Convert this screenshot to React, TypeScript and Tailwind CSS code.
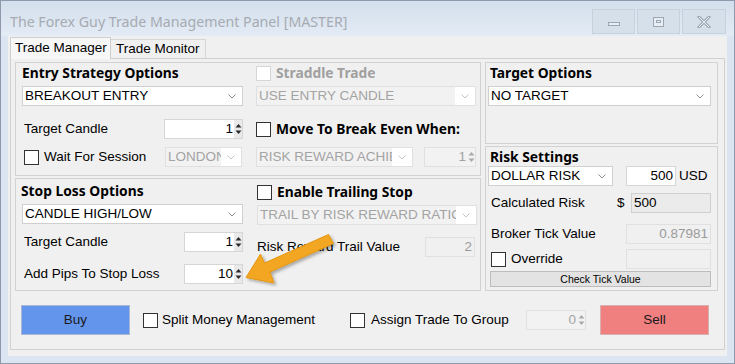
import React from "react";

const SANS = "font-['Liberation_Sans',Arial,sans-serif]";
const HEAD = "font-['Noto_Sans',sans-serif] font-bold text-[13.8px] leading-[16px]";

function Check({ disabled = false }: { disabled?: boolean }) {
  return (
    <div
      className={`w-[15px] h-[15px] shrink-0 bg-white border ${
        disabled ? "border-[#d6d6d6]" : "border-[#333333]"
      }`}
    />
  );
}

function Chevron({ light = false }: { light?: boolean }) {
  return (
    <svg width="8" height="5" viewBox="0 0 8 5">
      <polyline
        points="0.5,0.5 4,4 7.5,0.5"
        fill="none"
        stroke={light ? "#c4c4c4" : "#8f8f8f"}
        strokeWidth="1"
      />
    </svg>
  );
}

function Select({
  text,
  w,
  disabled = false,
  className = "",
}: {
  text: string;
  w: string;
  disabled?: boolean;
  className?: string;
}) {
  return (
    <div
      className={`${w} h-[20px] shrink-0 flex items-stretch border ${
        disabled ? "border-[#e0e0e0] bg-[#f2f2f2]" : "border-[#cfcfcf] bg-white"
      } ${className}`}
    >
      <div
        className={`flex-1 overflow-hidden whitespace-nowrap pl-[2px] text-[13.5px] leading-[18px] ${
          disabled ? "text-[#a3a3a3]" : "text-black"
        }`}
      >
        {text}
      </div>
      <div className="w-[20px] shrink-0 flex items-center justify-center bg-white">
        <Chevron light={disabled} />
      </div>
    </div>
  );
}

function SpinArrows({ disabled = false }: { disabled?: boolean }) {
  const c = disabled ? "#a9a9a9" : "#2b2b2b";
  return (
    <div className={`w-[8px] shrink-0 flex items-center justify-center ${disabled ? "" : "bg-[#e9e9e9]"}`}>
      <svg width="7" height="14" viewBox="0 0 7 14">
        <polygon points="0.5,5.5 3.5,2 6.5,5.5" fill={c} />
        <polygon points="0.5,8.5 3.5,12 6.5,8.5" fill={c} />
      </svg>
    </div>
  );
}

function Spinner({
  value,
  w,
  disabled = false,
  className = "",
}: {
  value: string;
  w: string;
  disabled?: boolean;
  className?: string;
}) {
  return (
    <div
      className={`${w} h-[20px] shrink-0 flex items-stretch border ${
        disabled ? "border-[#e0e0e0] bg-[#f2f2f2]" : "border-[#d6d6d6] bg-white"
      } ${className}`}
    >
      <div
        className={`flex-1 text-right text-[13.5px] leading-[18px] pr-[1px] ${
          disabled ? "text-[#a3a3a3]" : "text-black"
        }`}
      >
        {value}
      </div>
      <SpinArrows disabled={disabled} />
    </div>
  );
}

function Field({
  value,
  w,
  align = "right",
  variant = "white",
  className = "",
}: {
  value: string;
  w: string;
  align?: "left" | "right";
  variant?: "white" | "readonly" | "disabled";
  className?: string;
}) {
  const v =
    variant === "white"
      ? "bg-white border-[#d6d6d6] text-black"
      : variant === "readonly"
      ? "bg-[#ebebeb] border-[#cfcfcf] text-black"
      : "bg-[#f0f0f0] border-[#e0e0e0] text-[#9a9a9a]";
  return (
    <div
      className={`${w} h-[20px] shrink-0 border px-[2px] text-[13.5px] leading-[18px] ${v} ${
        align === "right" ? "text-right" : "text-left"
      } ${className}`}
    >
      {value}
    </div>
  );
}

function Label({ children, className = "" }: { children: React.ReactNode; className?: string }) {
  return <div className={`text-[13.5px] leading-[18px] text-black whitespace-nowrap ${className}`}>{children}</div>;
}

export default function App() {
  return (
    <div
      className={`relative w-[735px] h-[364px] overflow-hidden border border-[#8d9aab] bg-[#dbe5f1] flex flex-col ${SANS}`}
    >
      {/* Title bar */}
      <div className="h-[35px] shrink-0 flex items-start bg-gradient-to-b from-[#d3dfec] to-[#e3ebf5]">
        <div className="ml-[9px] mt-[11px] leading-[20px] text-[14.2px] text-[#a7abb1] font-['Noto_Sans',sans-serif] whitespace-nowrap">
          The Forex Guy Trade Management Panel [MASTER]
        </div>
        <div className="ml-auto mr-[8px] mt-[8px] flex gap-[2px]">
          <div className="w-[43px] h-[25px] border border-[#c6d1de] bg-[#d6e0eb] flex items-center justify-center">
            <div className="w-[12px] h-[4px] mt-[4px] border border-[#9ba6b3] bg-[#e8edf3]" />
          </div>
          <div className="w-[43px] h-[25px] border border-[#c6d1de] bg-[#d6e0eb] flex items-center justify-center">
            <div className="w-[11px] h-[10px] border border-[#9ba6b3] bg-[#e8edf3] flex items-center justify-center">
              <div className="w-[5px] h-[3px] border border-[#9ba6b3]" />
            </div>
          </div>
          <div className="w-[44px] h-[25px] border border-[#c6d1de] bg-[#d6e0eb] flex items-center justify-center">
            <svg width="14" height="12" viewBox="0 0 14 12">
              <path d="M2 1 L12 11 M12 1 L2 11" stroke="#9ea9b6" strokeWidth="3" strokeLinecap="square" />
              <path d="M2 1 L12 11 M12 1 L2 11" stroke="#eef2f7" strokeWidth="1" />
            </svg>
          </div>
        </div>
      </div>

      {/* Client area */}
      <div className="mx-[7px] h-[320px] shrink-0 bg-[#f0f0f0] flex flex-col">
        {/* Tabs */}
        <div className="ml-[2px] mt-[1px] h-[21px] flex items-end">
          <div className="w-[101px] h-[22px] -mb-[1px] border border-b-0 border-[#cfcfcf] bg-[#f7f7f7] pl-[4px] text-[13.5px] leading-[20px] text-black relative z-10">
            Trade Manager
          </div>
          <div className="w-[95px] h-[19px] border border-b-0 border-l-0 border-[#d6d6d6] bg-[#f0f0f0] pl-[5px] text-[13.5px] leading-[18px] text-black">
            Trade Monitor
          </div>
        </div>

        {/* Tab panel */}
        <div className="ml-[2px] w-[715px] h-[292px] border border-[#d0d0d0] bg-[#f0f0f0] flex flex-col">
          <div className="ml-[4px] mt-[3px] flex gap-[4px]">
            {/* Left column */}
            <div className="w-[466px] flex flex-col gap-[2px]">
              {/* Entry Strategy */}
              <div className="h-[114px] border border-[#d2d2d2] pl-[6px] flex flex-col">
                <div className="mt-[2px] h-[16px] flex">
                  <div className={`w-[221px] ${HEAD} text-black`}>Entry Strategy Options</div>
                  <div className="ml-[13px] flex items-center">
                    <Check disabled />
                    <div className={`ml-[5px] ${HEAD} text-[#a0a0a0]`}>Straddle Trade</div>
                  </div>
                </div>
                <div className="mt-[5px] h-[20px] flex gap-[13px]">
                  <Select text="BREAKOUT ENTRY" w="w-[221px]" />
                  <Select text="USE ENTRY CANDLE" w="w-[220px]" disabled />
                </div>
                <div className="mt-[13px] h-[20px] flex gap-[13px]">
                  <div className="w-[221px] flex items-center">
                    <Label className="ml-[2px]">Target Candle</Label>
                    <Spinner value="1" w="w-[79px]" className="ml-auto" />
                  </div>
                  <div className="flex items-center">
                    <Check />
                    <div className={`ml-[5px] ${HEAD} text-black`}>Move To Break Even When:</div>
                  </div>
                </div>
                <div className="mt-[8px] h-[20px] flex gap-[13px]">
                  <div className="w-[221px] flex items-center">
                    <div className="ml-[2px]">
                      <Check />
                    </div>
                    <Label className="ml-[5px]">Wait For Session</Label>
                    <Select text="LONDON" w="w-[77px]" disabled className="ml-auto mr-[1px]" />
                  </div>
                  <div className="flex items-center">
                    <Select text="RISK REWARD ACHIEVED" w="w-[157px]" disabled />
                    <Spinner value="1" w="w-[52px]" disabled className="ml-[11px]" />
                  </div>
                </div>
              </div>

              {/* Stop Loss */}
              <div className="h-[113px] border border-[#d2d2d2] pl-[5px] flex gap-[14px]">
                <div className="w-[222px] flex flex-col">
                  <div className={`mt-[4px] h-[16px] ${HEAD} text-black`}>Stop Loss Options</div>
                  <Select text="CANDLE HIGH/LOW" w="w-[221px]" className="mt-[5px] ml-[1px]" />
                  <div className="mt-[8px] h-[20px] flex items-center">
                    <Label className="ml-[3px]">Target Candle</Label>
                    <Spinner value="1" w="w-[59px]" className="ml-auto" />
                  </div>
                  <div className="mt-[12px] h-[20px] flex items-center">
                    <Label className="ml-[3px]">Add Pips To Stop Loss</Label>
                    <Spinner value="10" w="w-[59px]" className="ml-auto" />
                  </div>
                </div>
                <div className="w-[220px] flex flex-col">
                  <div className="mt-[5px] h-[16px] flex items-center">
                    <Check />
                    <div className={`ml-[5px] ${HEAD} text-black`}>Enable Trailing Stop</div>
                  </div>
                  <Select text="TRAIL BY RISK REWARD RATIO" w="w-[220px]" disabled className="mt-[5px]" />
                  <div className="mt-[12px] h-[19px] flex items-center">
                    <Label>Risk Reward Trail Value</Label>
                    <Field value="2" w="w-[50px]" variant="disabled" className="ml-auto mr-[2px] h-[19px]" />
                  </div>
                </div>
              </div>
            </div>

            {/* Right column */}
            <div className="w-[233px] flex flex-col gap-[2px]">
              <div className="h-[82px] border border-[#d2d2d2] pl-[2px] flex flex-col">
                <div className={`mt-[2px] ml-[2px] h-[16px] ${HEAD} text-black`}>Target Options</div>
                <Select text="NO TARGET" w="w-[223px]" className="mt-[5px]" />
              </div>
              <div className="h-[145px] border border-[#d2d2d2] pl-[2px] flex flex-col">
                <div className={`mt-[2px] ml-[2px] h-[16px] ${HEAD} text-black`}>Risk Settings</div>
                <div className="mt-[1px] h-[20px] flex items-center">
                  <Select text="DOLLAR RISK" w="w-[125px]" />
                  <Field value="500" w="w-[50px]" className="ml-[13px]" />
                  <Label className="ml-[3px]">USD</Label>
                </div>
                <div className="mt-[7px] h-[20px] flex items-center">
                  <Label className="ml-[3px] w-[126px]">Calculated Risk</Label>
                  <Label className="w-[14px]">$</Label>
                  <Field value="500" w="w-[80px]" align="left" variant="readonly" />
                </div>
                <div className="mt-[11px] h-[20px] flex items-center">
                  <Label className="ml-[3px] w-[135px]">Broker Tick Value</Label>
                  <Field value="0.87981" w="w-[85px]" variant="disabled" />
                </div>
                <div className="mt-[5px] h-[20px] flex items-center">
                  <div className="ml-[3px]">
                    <Check />
                  </div>
                  <Label className="ml-[5px] w-[115px]">Override</Label>
                  <Field value="" w="w-[85px]" variant="disabled" />
                </div>
                <div className="mt-[2px] ml-[2px] w-[221px] h-[16px] border border-[#bdbdbd] bg-[#e3e3e3] text-center text-[10.5px] leading-[14px] text-black">
                  Check Tick Value
                </div>
              </div>
            </div>
          </div>

          {/* Bottom row */}
          <div className="mt-[14px] ml-[10px] h-[30px] flex items-center">
            <div className="w-[109px] h-[30px] border border-[#a9b8d4] bg-[#6495ed] text-center text-[13.5px] leading-[28px] text-[#1a1a1a]">
              Buy
            </div>
            <div className="ml-[13px]">
              <Check />
            </div>
            <Label className="ml-[4px] w-[188px]">Split Money Management</Label>
            <Check />
            <Label className="ml-[6px] w-[155px]">Assign Trade To Group</Label>
            <Spinner value="0" w="w-[60px]" disabled className="h-[19px]" />
            <div className="ml-[14px] w-[109px] h-[30px] border border-[#d8b0b0] bg-[#f08080] text-center text-[13.5px] leading-[28px] text-[#1a1a1a]">
              Sell
            </div>
          </div>
        </div>
      </div>

      {/* Annotation arrow */}
      <svg
        className="absolute left-0 top-0 pointer-events-none"
        width="735"
        height="364"
        viewBox="0 0 735 364"
      >
        <defs>
          <filter id="sh" x="-20%" y="-20%" width="140%" height="140%">
            <feDropShadow dx="2" dy="2" stdDeviation="1.5" floodColor="#000" floodOpacity="0.3" />
          </filter>
        </defs>
        <polygon
          filter="url(#sh)"
          points="327.5,233.5 332.5,242.5 269,271 273,282 245,276.5 259.5,253 263.5,262"
          fill="#f3a623"
          stroke="#e39612"
          strokeWidth="1"
          strokeLinejoin="round"
        />
      </svg>
    </div>
  );
}
